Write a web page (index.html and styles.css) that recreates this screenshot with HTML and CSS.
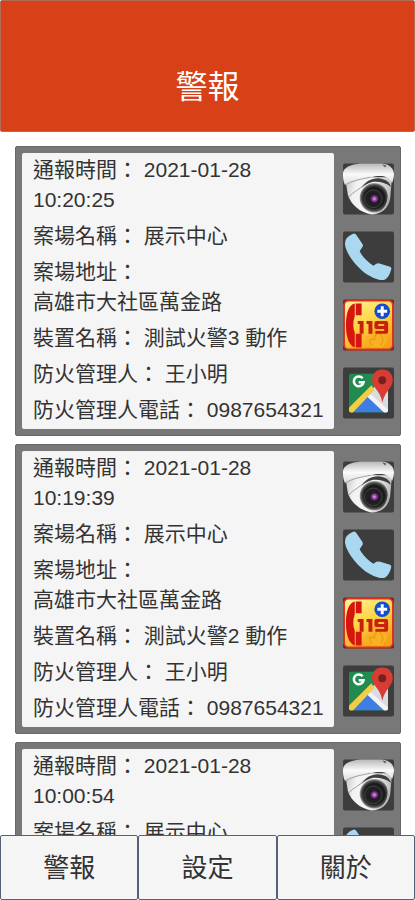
FILE: index.html
```html
<!DOCTYPE html>
<html lang="zh-Hant">
<head>
<meta charset="utf-8">
<meta name="viewport" content="width=device-width, initial-scale=1">
<title>警報</title>
<link rel="stylesheet" href="styles.css">
</head>
<body>
<svg class="sprite" aria-hidden="true">
  <defs>
    <linearGradient id="shell" x1="0" y1="0.1" x2="1" y2="0.3">
      <stop offset="0" stop-color="#c4c4c4"/>
      <stop offset="0.25" stop-color="#f2f2f2"/>
      <stop offset="0.6" stop-color="#f7f7f7"/>
      <stop offset="1" stop-color="#bcbcbc"/>
    </linearGradient>
    <linearGradient id="rim" x1="0" y1="0" x2="0" y2="1">
      <stop offset="0" stop-color="#b8b8b8"/>
      <stop offset="0.5" stop-color="#fafafa"/>
      <stop offset="1" stop-color="#dcdcdc"/>
    </linearGradient>
    <radialGradient id="ball" cx="0.5" cy="0.5" r="0.5">
      <stop offset="0.7" stop-color="#1a1a1a"/>
      <stop offset="0.88" stop-color="#4c4c4c"/>
      <stop offset="1" stop-color="#a8a8a8"/>
    </radialGradient>
    <radialGradient id="lens">
      <stop offset="0" stop-color="#e9a5ee"/>
      <stop offset="0.4" stop-color="#994ba6"/>
      <stop offset="0.75" stop-color="#4b2057"/>
      <stop offset="1" stop-color="#151018"/>
    </radialGradient>
    <linearGradient id="fire" x1="0" y1="0" x2="0.5" y2="1">
      <stop offset="0" stop-color="#fff3a0"/>
      <stop offset="0.5" stop-color="#ffd84a"/>
      <stop offset="1" stop-color="#f7a21b"/>
    </linearGradient>
    <clipPath id="map-clip"><rect x="6" y="6" width="40" height="40" rx="3"/></clipPath>
  </defs>
  <symbol id="camera" viewBox="0 0 52 52">
    <rect width="52" height="52" rx="2" fill="#3d3d3d"/>
    <path d="M2 14L5 32C8 42 18 50 29 52C39 52 46 46 48 36L50 14Z" fill="url(#shell)"/>
    <path d="M0 10C0 4 8 1 18 0H38C47 0 52 5 52 11C52 14 51 18 50 20C47 13 40 12 33 13C20 16 10 18 2 22C0 18 0 14 0 10Z" fill="url(#rim)"/>
    <path d="M2 22C10 17 19 16 28 14M6 34C10 29 18 26 22 21" fill="none" stroke="#8a8a8a" stroke-width="0.8"/>
    <path d="M19 25C23 17 33 13 41 16C45 17 48 20 49 24C43 19 35 18 29 19C25 20 22 22 19 25Z" fill="#3f3f3f"/>
    <path d="M40 1L44 2L43 4Z" fill="#555"/>
    <ellipse cx="32" cy="35" rx="15" ry="15" fill="url(#ball)"/>
    <path d="M38 20C49 25 48 40 40 48" fill="none" stroke="#d5d5d5" stroke-width="1"/>
    <circle cx="31" cy="36" r="9" fill="#202020" stroke="#4e4e4e" stroke-width="0.8"/>
    <circle cx="32" cy="36" r="5" fill="url(#lens)"/>
  </symbol>
  <symbol id="phone" viewBox="0 0 52 52">
    <rect width="52" height="52" rx="2" fill="#3d3d3d"/>
    <path d="M3 8C5 5 8 3 11 2Q13 2 14 4L20 13Q21 15 19 17L17 20C19 25 25 31 31 35L34 33Q36 32 38 33L48 36Q50 37 49 39C48 43 46 47 43 49C38 51 29 47 22 42C12 34 3 22 2 13Q2 10 3 8Z" fill="#a9d8f0"/>
  </symbol>
  <symbol id="fire119" viewBox="0 0 52 52">
    <rect width="52" height="52" rx="2" fill="#4a302c"/>
    <rect x="1" y="1" width="50" height="50" rx="5" fill="url(#fire)" stroke="#d9301f" stroke-width="2"/>
    <path d="M29 49C21 44 22 37 27 37C26 31 33 30 34 25C39 29 39 33 41 36C47 37 46 45 39 49Z" fill="#f9b221"/>
    <path d="M30 47C25 43 28 39 32 41C32 36 35 35 36 33C40 38 43 42 38 47" fill="none" stroke="#ef9a1d" stroke-width="1.5"/>
    <path d="M12 4V17Q9 26 12 34V49C6 47 3 38 3 26C3 14 6 5 12 4Z" fill="#d5160e"/>
    <path d="M13 4H19V16H13ZM13 35H19V49H13Z" fill="#d5160e"/>
    <path d="M15 22H21V35H17V25H15ZM24 22H30V35H26V25H24Z" fill="#c9200e"/>
    <path d="M34 22H44Q46 22 46 24V33Q46 35 44 35H33V32H42V30H34Q32 30 32 28V24Q32 22 34 22ZM36 25V27H42V25Z" fill="#c9200e" fill-rule="evenodd"/>
    <circle cx="40" cy="12" r="8" fill="#124ed0"/>
    <path d="M40 7V17M35 12H45" stroke="#fff" stroke-width="3"/>
  </symbol>
  <symbol id="map" viewBox="0 0 52 52">
    <rect width="52" height="52" rx="2" fill="#3d3d3d"/>
    <g clip-path="url(#map-clip)">
      <rect x="6" y="6" width="40" height="40" fill="#218b50"/>
      <path d="M26 27L46 46V8L38 12Z" fill="#d9dce0"/>
      <path d="M26 26L46 46H8Z" fill="#3e7de4"/>
      <path d="M26 25L46 43V47H43L24 29Z" fill="#f2f3f5"/>
      <path d="M6 41L29 18L32 23L9 47H6Z" fill="#f3ce45"/>
    </g>
    <path d="M20 11A5 5 0 1 0 21 15H16" fill="none" stroke="#fff" stroke-width="2.6"/>
    <path d="M40 36C39 29 36 25 32 20C27 13 30 2 40 2C50 2 53 12 49 19C45 25 42 28 40 36Z" fill="#d83c34"/>
    <circle cx="40" cy="13" r="4" fill="#76211d"/>
  </symbol>
</svg>

<div class="app">
  <header class="header"><h1 class="title">警報</h1></header>

  <main class="alerts">
    <article class="card">
      <div class="details">
        <p>通報時間： 2021-01-28 10:20:25</p>
        <p>案場名稱： 展示中心</p>
        <p>案場地址： 高雄市大社區萬金路</p>
        <p>裝置名稱： 測試火警3 動作</p>
        <p>防火管理人： 王小明</p>
        <p>防火管理人電話： 0987654321</p>
      </div>
      <div class="actions">
        <button class="action" type="button"><svg><use href="#camera"/></svg></button>
        <button class="action" type="button"><svg><use href="#phone"/></svg></button>
        <button class="action" type="button"><svg><use href="#fire119"/></svg></button>
        <button class="action" type="button"><svg><use href="#map"/></svg></button>
      </div>
    </article>

    <article class="card">
      <div class="details">
        <p>通報時間： 2021-01-28 10:19:39</p>
        <p>案場名稱： 展示中心</p>
        <p>案場地址： 高雄市大社區萬金路</p>
        <p>裝置名稱： 測試火警2 動作</p>
        <p>防火管理人： 王小明</p>
        <p>防火管理人電話： 0987654321</p>
      </div>
      <div class="actions">
        <button class="action" type="button"><svg><use href="#camera"/></svg></button>
        <button class="action" type="button"><svg><use href="#phone"/></svg></button>
        <button class="action" type="button"><svg><use href="#fire119"/></svg></button>
        <button class="action" type="button"><svg><use href="#map"/></svg></button>
      </div>
    </article>

    <article class="card">
      <div class="details">
        <p>通報時間： 2021-01-28 10:00:54</p>
        <p>案場名稱： 展示中心</p>
      </div>
      <div class="actions">
        <button class="action" type="button"><svg><use href="#camera"/></svg></button>
        <button class="action" type="button"><svg><use href="#phone"/></svg></button>
      </div>
    </article>
  </main>

  <nav class="tabs">
    <button class="tab" type="button">警報</button>
    <button class="tab" type="button">設定</button>
    <button class="tab" type="button">關於</button>
  </nav>
</div>
</body>
</html>
```
FILE: styles.css
```css
* {
  box-sizing: border-box;
}

body,
h1,
p {
  margin: 0;
}

body,
button {
  font-family: "Liberation Sans", "Noto Sans CJK TC", sans-serif;
}

.sprite {
  position: absolute;
  width: 0;
  height: 0;
}

.app {
  display: flex;
  flex-direction: column;
  height: 100vh;
  background: #fff;
}

.header {
  flex: none;
  padding: 62px 16px 20px;
  border: 1px solid #b5695a;
  border-radius: 2px;
  background: #d84018;
  text-align: center;
}

.title {
  color: #fff;
  font-size: 32px;
  font-weight: 400;
  line-height: 48px;
}

.alerts {
  flex: 1;
  min-height: 0;
  display: flex;
  flex-direction: column;
  gap: 8px;
  padding: 14px 14px 0 15px;
  overflow: hidden;
}

.card {
  flex: none;
  display: flex;
  gap: 9px;
  min-height: 290px;
  padding: 6px;
  border: 1px solid #686868;
  border-radius: 2px;
  background: #787878;
}

.details {
  flex: 1;
  display: flex;
  flex-direction: column;
  gap: 6px;
  padding: 2px 8px 4px 11px;
  border-radius: 2px;
  background: #f5f5f5;
  color: #333;
  font-size: 21px;
  line-height: 30px;
  word-break: keep-all;
}

.actions {
  flex: none;
  display: flex;
  flex-direction: column;
  gap: 16px;
  padding-top: 10px;
}

.action {
  width: 51px;
  height: 52px;
  padding: 0;
  border: 0;
  background: none;
}

.action svg {
  display: block;
  width: 100%;
  height: 100%;
}

.tabs {
  flex: none;
  display: flex;
}

.tab {
  flex: 1;
  height: 65px;
  padding: 0;
  border: 1px solid #566078;
  border-radius: 2px;
  background: #f5f5f5;
  color: #333;
  font-size: 26px;
  line-height: 40px;
}
```
